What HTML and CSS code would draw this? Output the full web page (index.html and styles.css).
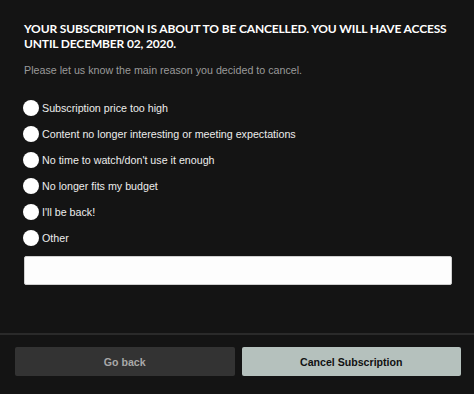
FILE: index.html
```html
<!DOCTYPE html>
<html>
<head>
<meta charset="utf-8">
<link rel="stylesheet" href="styles.css">
</head>
<body>
<div class="modal">
  <div class="content">
    <h1 class="title">YOUR SUBSCRIPTION IS ABOUT TO BE CANCELLED. YOU WILL HAVE ACCESS UNTIL DECEMBER 02, 2020.</h1>
    <p class="subtitle">Please let us know the main reason you decided to cancel.</p>
    <ul class="reasons">
      <li class="reason"><span class="radio"></span><span class="label">Subscription price too high</span></li>
      <li class="reason"><span class="radio"></span><span class="label">Content no longer interesting or meeting expectations</span></li>
      <li class="reason"><span class="radio"></span><span class="label">No time to watch/don't use it enough</span></li>
      <li class="reason"><span class="radio"></span><span class="label">No longer fits my budget</span></li>
      <li class="reason"><span class="radio"></span><span class="label">I'll be back!</span></li>
      <li class="reason"><span class="radio"></span><span class="label">Other</span></li>
    </ul>
    <div class="other-input"></div>
  </div>
  <div class="footer">
    <button class="btn btn-back">Go back</button>
    <button class="btn btn-cancel">Cancel Subscription</button>
  </div>
</div>
</body>
</html>
```

FILE: styles.css
```css
html, body {
  margin: 0;
  padding: 0;
  background: #141414;
}
.modal {
  width: 474px;
  height: 394px;
  display: flex;
  flex-direction: column;
  background: #141414;
}
.content {
  padding: 21px 20px 48px 24px;
}
.title {
  margin: 0;
  font-family: Lato, "Liberation Sans", sans-serif;
  font-weight: 700;
  font-size: 12px;
  line-height: 15px;
  color: #ffffff;
  letter-spacing: -0.15px;
}
.subtitle {
  margin: 12px 0 0;
  font-family: "Liberation Sans", Arial, sans-serif;
  font-size: 10.7px;
  line-height: 14px;
  color: #9a9a9a;
}
.reasons {
  list-style: none;
  margin: 18px 0 0;
  padding: 0;
}
.reason {
  height: 26px;
  display: flex;
  align-items: center;
  font-family: "Liberation Sans", Arial, sans-serif;
  font-size: 10.7px;
  color: #ececec;
}
.radio {
  width: 16px;
  height: 16px;
  margin-left: -1px;
  border-radius: 50%;
  background: #ffffff;
  flex: none;
}
.label {
  margin-left: 3px;
}
.other-input {
  margin-top: 5px;
  height: 29px;
  width: 428px;
  box-sizing: border-box;
  background: #fdfdfd;
  border: 1px solid #d0d0d0;
  border-radius: 2px;
}
.footer {
  border-top: 2px solid #2a2a2a;
  padding: 12px 13px 0 15px;
  display: flex;
  gap: 7px;
}
.btn {
  flex: 1;
  height: 29px;
  border: none;
  border-radius: 2px;
  font-family: "Liberation Sans", Arial, sans-serif;
  font-weight: 700;
  font-size: 10.6px;
  padding: 0;
}
.btn-back {
  background: #333333;
  color: #a8a8a8;
}
.btn-cancel {
  background: #b5c1bd;
  color: #111111;
}
```
